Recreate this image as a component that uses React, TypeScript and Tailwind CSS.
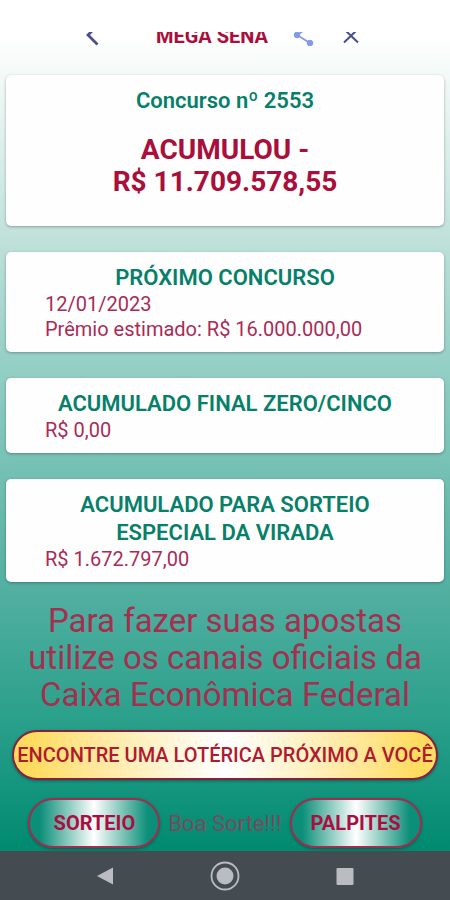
import type { ReactNode } from "react";

function Card({ title, children }: { title: string; children: ReactNode }) {
  return (
    <section className="rounded-[5px] bg-[#fefefe] px-[39px] pt-3 pb-[10px] shadow-[0_1px_3px_rgba(0,0,0,0.3)]">
      <h2 className="text-center text-[22px] leading-7 font-semibold text-[#07806a]">{title}</h2>
      <div className="text-[20px] leading-[25px] text-[#a92c56]">{children}</div>
    </section>
  );
}

function PillButton({ children }: { children: ReactNode }) {
  return (
    <button
      type="button"
      className="h-[50px] w-[132px] shrink-0 rounded-full border-2 border-[#a02c50] bg-linear-to-r/srgb from-[#0c8f79] from-8% via-white to-[#0c8f79] to-92% text-[20px] font-bold text-[#a90f41] shadow-[0_1px_3px_rgba(0,0,0,0.35)]"
    >
      {children}
    </button>
  );
}

function Header() {
  return (
    <header className="mt-8 flex h-[43px] items-start overflow-hidden">
      <div className="-mt-[9px] flex w-full items-center justify-center pr-1.5">
        <button type="button" aria-label="Voltar" className="mr-[56px] text-[#4a4f93]">
          <svg width="16" height="26" viewBox="0 0 16 26" fill="none" stroke="currentColor" strokeWidth="2.800">
            <path d="M9 7L4 12L13.500 21.500" />
          </svg>
        </button>
        <h1 className="text-[20px] leading-6 font-bold text-[#a90f3a]">MEGA SENA</h1>
        <button type="button" aria-label="Compartilhar" className="ml-6 text-[#8299e8]">
          <svg width="22" height="26" viewBox="0 0 22 26" fill="currentColor" stroke="currentColor">
            <path d="M17 4L5 12L18 20" fill="none" strokeWidth="1.800" />
            <circle cx="17" cy="4" r="2.500" />
            <circle cx="5" cy="12" r="2.800" />
            <circle cx="18" cy="20" r="2.800" />
          </svg>
        </button>
        <button type="button" aria-label="Fechar" className="ml-7 text-[#454f88]">
          <svg width="18" height="26" viewBox="0 0 18 26" fill="none" stroke="currentColor" strokeWidth="2">
            <path d="M2 6L16 19.500M16 6L2 19.500" />
          </svg>
        </button>
      </div>
    </header>
  );
}

function SystemBar() {
  return (
    <nav className="mt-auto flex h-[49px] items-center justify-center gap-[88px] bg-[#444b51] text-[#b9bdc1]">
      <button type="button" aria-label="Anterior">
        <svg width="32" height="32" viewBox="0 0 32 32" fill="currentColor">
          <path d="M8 16L24 7.500V24.500Z" />
        </svg>
      </button>
      <button type="button" aria-label="Início">
        <svg width="32" height="32" viewBox="0 0 32 32" fill="currentColor">
          <circle cx="16" cy="16" r="13.500" fill="none" stroke="currentColor" strokeWidth="1.800" />
          <circle cx="16" cy="16" r="8.500" />
        </svg>
      </button>
      <button type="button" aria-label="Recentes">
        <svg width="32" height="32" viewBox="0 0 32 32" fill="currentColor">
          <rect x="7.500" y="8" width="17" height="17" rx="1" />
        </svg>
      </button>
    </nav>
  );
}

export default function App() {
  return (
    <div className="flex min-h-screen flex-col bg-[linear-gradient(to_bottom,#fff_36px,#bfe1da_240px,#94cfc5_365px,#4fae9f_600px,#2aa08b_720px,#008a70_851px)] font-[Roboto,sans-serif]">
      <Header />

      <main className="flex flex-col gap-[26px] px-[6px]">
        <section className="rounded-[5px] bg-[#fefefe] px-4 pt-3 pb-7 text-center shadow-[0_1px_3px_rgba(0,0,0,0.3)]">
          <h2 className="text-[22px] leading-7 font-semibold text-[#07806a]">Concurso nº 2553</h2>
          <p className="mt-[19px] text-[28px] leading-8 font-bold text-[#a90f3a]">
            ACUMULOU -<br />
            R$ 11.709.578,55
          </p>
        </section>

        <Card title="PRÓXIMO CONCURSO">
          <p>12/01/2023</p>
          <p>Prêmio estimado: R$ 16.000.000,00</p>
        </Card>

        <Card title="ACUMULADO FINAL ZERO/CINCO">
          <p>R$ 0,00</p>
        </Card>

        <Card title="ACUMULADO PARA SORTEIO ESPECIAL DA VIRADA">
          <p>R$ 1.672.797,00</p>
        </Card>
      </main>

      <p className="mt-5 px-4 text-center text-[33px] leading-[37px] text-[#a4304f]">
        Para fazer suas apostas utilize os canais oficiais da Caixa Econômica Federal
      </p>

      <button
        type="button"
        className="mx-3 mt-[17px] h-[50px] rounded-full border-2 border-[#86203f] bg-linear-to-r from-[#ffdc60] from-5% via-white to-[#ffdc60] to-95% text-[20px] font-medium whitespace-nowrap text-[#b01a30] shadow-[0_1px_3px_rgba(0,0,0,0.35)]"
      >
        ENCONTRE UMA LOTÉRICA PRÓXIMO A VOCÊ
      </button>

      <div className="mt-[18px] mb-[3px] flex items-center justify-center gap-2">
        <PillButton>SORTEIO</PillButton>
        <span className="text-[22px] text-[#7b4a60]">Boa Sorte!!!</span>
        <PillButton>PALPITES</PillButton>
      </div>

      <SystemBar />
    </div>
  );
}
